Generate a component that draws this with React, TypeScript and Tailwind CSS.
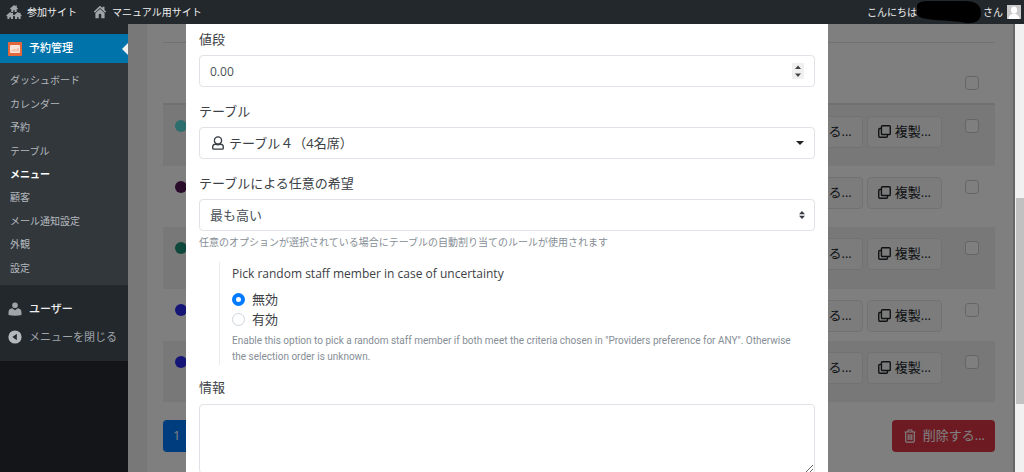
import type { ReactNode } from "react";

const submenu = ["ダッシュボード", "カレンダー", "予約", "テーブル", "メニュー", "顧客", "メール通知設定", "外観", "設定"];

const rows = [
  { id: 1, dot: "bg-[#58dada]", height: "h-[62px]" },
  { id: 2, dot: "bg-[#521855]", height: "h-[61px]" },
  { id: 3, dot: "bg-[#1c8f76]", height: "h-[62px]" },
  { id: 4, dot: "bg-[#2b2bee]", height: "h-[52px]" },
  { id: 5, dot: "bg-[#2b2bee]", height: "h-[61px]" },
];

const NetworkIcon = () => (
  <svg viewBox="0 0 16 16" className="h-4 w-4 fill-[#a0a5aa]" aria-hidden="true">
    <path d="M8 1 4 4.6l.7.8.6-.4v3h2V6.2h1.4V8h2V5l.6.4.7-.8-1.2-1.1V1.6H9.4v.7z" />
    <path d="M4.2 8 .2 11.6l.7.8.5-.4v3h2v-1.8H5V15h2v-3l.5.4.7-.8L7 10.5V8.7H5.6v.6z" />
    <path d="M11.8 8 7.8 11.6l.7.8.5-.4v3h2v-1.8h1.6V15h2v-3l.5.4.7-.8-1.2-1.1V8.7h-1.4v.6z" />
  </svg>
);

const HomeIcon = () => (
  <svg viewBox="0 0 14 14" className="h-3.5 w-3.5 fill-[#a0a5aa]" aria-hidden="true">
    <path d="M7 .8.8 6.6l1.1 1.2L7 3.1l5.1 4.7 1.1-1.2-1.7-1.6V1.8H9.3v1.1z" />
    <path d="M7 3.9 2.4 8v5.3h3.3V10a1.3 1.3 0 0 1 2.6 0v3.3h3.3V8z" />
  </svg>
);

const PersonIcon = () => (
  <svg viewBox="0 0 14 14" className="h-3.5 w-3.5 fill-[#a0a5aa]" aria-hidden="true">
    <circle cx="7" cy="3.2" r="2.8" />
    <path d="M4.2 6.3 7 8.2l2.8-1.9c2.4.2 3.7 1.8 3.7 4.2V13c-3.8 1-9.2 1-13 0v-2.5c0-2.4 1.3-4 3.7-4.2z" />
  </svg>
);

const CollapseIcon = () => (
  <svg viewBox="0 0 14 14" className="h-3.5 w-3.5" aria-hidden="true">
    <circle cx="7" cy="7" r="6.6" fill="#b4b9be" />
    <path d="M8.8 3.8v6.4L4.4 7z" fill="#23282d" />
  </svg>
);

const BookingIcon = () => (
  <svg viewBox="0 0 14 14" className="h-3.5 w-3.5" aria-hidden="true">
    <rect width="14" height="14" rx="1" fill="#e2683c" />
    <rect x="2" y="3" width="10" height="8" rx="1" fill="#fbe5da" />
    <path d="M4 9.5V8M6 9.5V7M8 9.5V7.5M10 9.5V6" stroke="#eba083" strokeWidth="1" />
  </svg>
);

const CopyIcon = () => (
  <svg viewBox="0 0 14 14" className="h-[13px] w-[13px] fill-none stroke-[#212529]" strokeWidth="1.5" aria-hidden="true">
    <rect x="3.7" y="0.8" width="9.5" height="9.5" rx="1" />
    <path d="M3.5 3.8H1.8a1 1 0 0 0-1 1v7.4a1 1 0 0 0 1 1h7.4a1 1 0 0 0 1-1v-1.7" />
  </svg>
);

const TrashIcon = () => (
  <svg viewBox="0 0 12 14" className="h-3.5 w-3 fill-none stroke-white" strokeWidth="1.2" aria-hidden="true">
    <path d="M.6 3h10.8M3.5 3l.8-2h3.4l.8 2M1.7 3v9a1.2 1.2 0 0 0 1.2 1.2h6.2a1.2 1.2 0 0 0 1.2-1.2V3M4.2 5.2V11M6 5.2V11M7.8 5.2V11" />
  </svg>
);

const StaffIcon = () => (
  <svg viewBox="0 0 12 14" className="h-3.5 w-3 fill-none stroke-[#343a40]" strokeWidth="1.3" aria-hidden="true">
    <circle cx="6" cy="4.4" r="3.6" />
    <path d="M3.4 8.2C1.6 8.4.7 9.6.7 11v1.2c0 .6.4 1 1 1h8.6c.6 0 1-.4 1-1V11c0-1.4-.9-2.6-2.7-2.8-1.6.8-3.6.8-5.2 0z" />
  </svg>
);

const TopBar = () => (
  <header className="flex h-6 shrink-0 items-center justify-between bg-[#23282d] pl-1.5 pr-[3px] text-[10px] text-[#eee]">
    <nav className="flex gap-4">
      <a href="#sites" className="flex items-center gap-[5px]">
        <NetworkIcon />
        参加サイト
      </a>
      <a href="#site" className="flex items-center gap-[5px]">
        <HomeIcon />
        マニュアル用サイト
      </a>
    </nav>
    <a href="#profile" className="flex items-center">
      こんにちは
      <svg viewBox="0 0 66 24" className="h-6 w-[66px]" aria-hidden="true">
        <path d="M-1 10C-1 1 6 1 14 1h34c11 0 16 4 16 12 0 9-8 11-16 10-8-2-18-2-30-3C6 19-1 18-1 10z" fill="#000" />
      </svg>
      さん
      <svg viewBox="0 0 14 14" className="ml-1 h-3.5 w-3.5" aria-hidden="true">
        <rect width="14" height="14" fill="#c9c9c9" />
        <ellipse cx="7" cy="5.2" rx="3" ry="3.6" fill="#fff" />
        <path d="M1.5 14c0-3 2-4.5 4-5h3c2 .5 4 2 4 5z" fill="#fff" />
      </svg>
    </a>
  </header>
);

const Sidebar = () => (
  <aside className="w-32 shrink-0 bg-[#131518] text-[11px]">
    <div className="bg-[#23282d] pb-2.5 pt-2.5">
      <a href="#booking" className="flex h-[29px] items-center justify-between bg-[#0073aa] pl-2 font-medium text-white">
        <span className="flex items-center gap-[7px]">
          <BookingIcon />
          予約管理
        </span>
        <svg viewBox="0 0 6 12" className="h-3 w-1.5 fill-[#f1f1f1]" aria-hidden="true">
          <path d="M6 0v12L0 6z" />
        </svg>
      </a>
      <ul className="grid h-[222px] auto-rows-fr items-center bg-[#32373c] pb-[5px] pl-2.5 pt-1.5 text-[10px]">
        {submenu.map((label) => (
          <li key={label}>
            <a href="#menu" className={label === "メニュー" ? "font-bold text-white" : "text-[#b4b9be]"}>
              {label}
            </a>
          </li>
        ))}
      </ul>
      <a href="#users" className="mt-2.5 flex h-7 items-center gap-[7px] pl-2 font-medium text-[#eee]">
        <PersonIcon />
        ユーザー
      </a>
      <button type="button" className="flex h-7 items-center gap-[7px] pl-2 text-[#a0a5aa]">
        <CollapseIcon />
        メニューを閉じる
      </button>
    </div>
  </aside>
);

const RowButton = ({ children }: { children: ReactNode }) => (
  <button type="button" className="flex h-8 items-center gap-1 rounded border border-[#e3e5e8] bg-[#f8f9fa] px-2.5 text-[13px] text-[#212529]">
    {children}
  </button>
);

const CheckBox = ({ label }: { label: string }) => (
  <input type="checkbox" aria-label={label} className="block h-3.5 w-3.5 appearance-none rounded-[3px] border border-[#c9cdd2] bg-white" />
);

const MenuTable = () => (
  <div className="ml-[19px] h-full border-l border-r-2 border-l-white border-r-[#d0d0d0] bg-[#fefefe] pl-[15px] pr-[18px] pt-[18px]">
    <table className="w-full border-t border-[#dee2e6]">
      <thead>
        <tr className="h-[61px] border-b-2 border-[#dee2e6]">
          <th aria-label="メニュー" />
          <th className="w-[46px] align-middle">
            <div className="flex justify-center pt-5">
              <CheckBox label="すべて選択" />
            </div>
          </th>
        </tr>
      </thead>
      <tbody>
        {rows.map((row) => (
          <tr key={row.id} className={`${row.height} align-top odd:bg-[#f0f0f0]`}>
            <td>
              <div className="flex items-start justify-between pl-3 pr-[7px] pt-[11px]">
                <span className={`mt-1 block h-3 w-3 rounded-full ${row.dot}`} />
                <div className="flex gap-1">
                  <RowButton>編集する...</RowButton>
                  <RowButton>
                    <CopyIcon />
                    複製...
                  </RowButton>
                </div>
              </div>
            </td>
            <td>
              <div className="flex justify-center pt-3.5">
                <CheckBox label={`行 ${row.id}`} />
              </div>
            </td>
          </tr>
        ))}
      </tbody>
    </table>
    <div className="mt-[18px] flex items-center justify-between">
      <button type="button" className="h-8 rounded bg-[#007bff] px-2.5 text-[13px] text-white">1</button>
      <button type="button" className="flex h-8 items-center gap-[7px] rounded bg-[#dc3545] px-2.5 pl-3 text-[13px] text-white">
        <TrashIcon />
        削除する...
      </button>
    </div>
  </div>
);

const MenuForm = () => (
  <form className="flex h-full flex-col bg-white px-[13px] pt-[5px] text-[13px] leading-5 text-[#3c4146]">
    <label htmlFor="price">値段</label>
    <div className="mt-1.5 flex h-8 shrink-0 items-center justify-between rounded border border-[#dfe2e6] px-2.5">
      <input id="price" defaultValue="0.00" inputMode="decimal" className="min-w-0 flex-1 pt-0.5 text-xs text-[#495057] outline-none" />
      <span className="flex h-4 w-3 flex-col items-center justify-center bg-[#f0f0f0]">
        <svg viewBox="0 0 12 16" className="h-4 w-3 fill-[#444]" aria-hidden="true">
          <path d="M3 6l3-3.5L9 6zM3 10.5h6L6 14z" />
        </svg>
      </span>
    </div>

    <label htmlFor="staff" className="mt-3.5">テーブル</label>
    <button id="staff" type="button" className="mt-1.5 flex h-8 shrink-0 items-center rounded border border-[#dfe2e6] px-2.5">
      <span className="ml-0.5 mr-[5px]">
        <StaffIcon />
      </span>
      テーブル４（4名席）
      <svg viewBox="0 0 8 4" className="ml-auto h-1 w-2 fill-[#212529]" aria-hidden="true">
        <path d="M0 0h8L4 4z" />
      </svg>
    </button>

    <label htmlFor="preference" className="mt-3.5">テーブルによる任意の希望</label>
    <div className="relative mt-1.5 shrink-0">
      <select id="preference" className="block h-8 w-full appearance-none rounded border border-[#dfe2e6] bg-white px-2.5 text-[#495057]">
        <option>最も高い</option>
      </select>
      <svg viewBox="0 0 6 8" className="pointer-events-none absolute right-2.5 top-3 h-2 w-1.5 fill-[#343a40]" aria-hidden="true">
        <path d="M0 3.2 3 0l3 3.2zM0 4.8h6L3 8z" />
      </svg>
    </div>
    <p className="mt-[3px] text-[10px] leading-4 text-[#868e96]">
      任意のオプションが選択されている場合にテーブルの自動割り当てのルールが使用されます
    </p>

    <fieldset className="ml-5 mt-3 border-l border-[#e9ecef] pl-3">
      <legend className="float-left mb-[5px] w-full pt-0.5 text-xs leading-5">Pick random staff member in case of uncertainty</legend>
      <div className="clear-both">
        {["無効", "有効"].map((label, i) => (
          <label key={label} className="flex h-5 items-center gap-[7px]">
            <input
              type="radio"
              name="random"
              defaultChecked={i === 0}
              className="h-[13px] w-[13px] appearance-none rounded-full border border-[#ced4da] bg-white checked:border-4 checked:border-[#007bff]"
            />
            {label}
          </label>
        ))}
      </div>
      <p className="mt-1 pr-3 font-['Roboto',sans-serif] text-[10px] leading-4 text-[#868e96]">
        Enable this option to pick a random staff member if both meet the criteria chosen in "Providers preference for ANY". Otherwise the selection order is unknown.
      </p>
    </fieldset>

    <label htmlFor="info" className="mt-3">情報</label>
    <textarea id="info" className="mt-[7px] h-[70px] shrink-0 resize-y rounded border border-[#dfe2e6] px-2.5 py-1.5" />
  </form>
);

const App = () => (
  <div className="flex h-screen flex-col overflow-hidden bg-[#f1f1f1] font-['Open_Sans','Noto_Sans_CJK_JP',sans-serif]">
    <TopBar />
    <div className="flex min-h-0 flex-1">
      <Sidebar />
      <main className="relative min-w-0 flex-1 overflow-hidden">
        <MenuTable />
        <div className="absolute inset-0 bg-black/50 pl-[58px] pr-[187px]">
          <MenuForm />
        </div>
      </main>
      <div className="flex w-[9px] shrink-0 flex-col bg-[#f1f1f1] pl-px pt-[174px]" aria-hidden="true">
        <div className="h-[206px] bg-[#c1c1c1]" />
      </div>
    </div>
  </div>
);

export default App;
